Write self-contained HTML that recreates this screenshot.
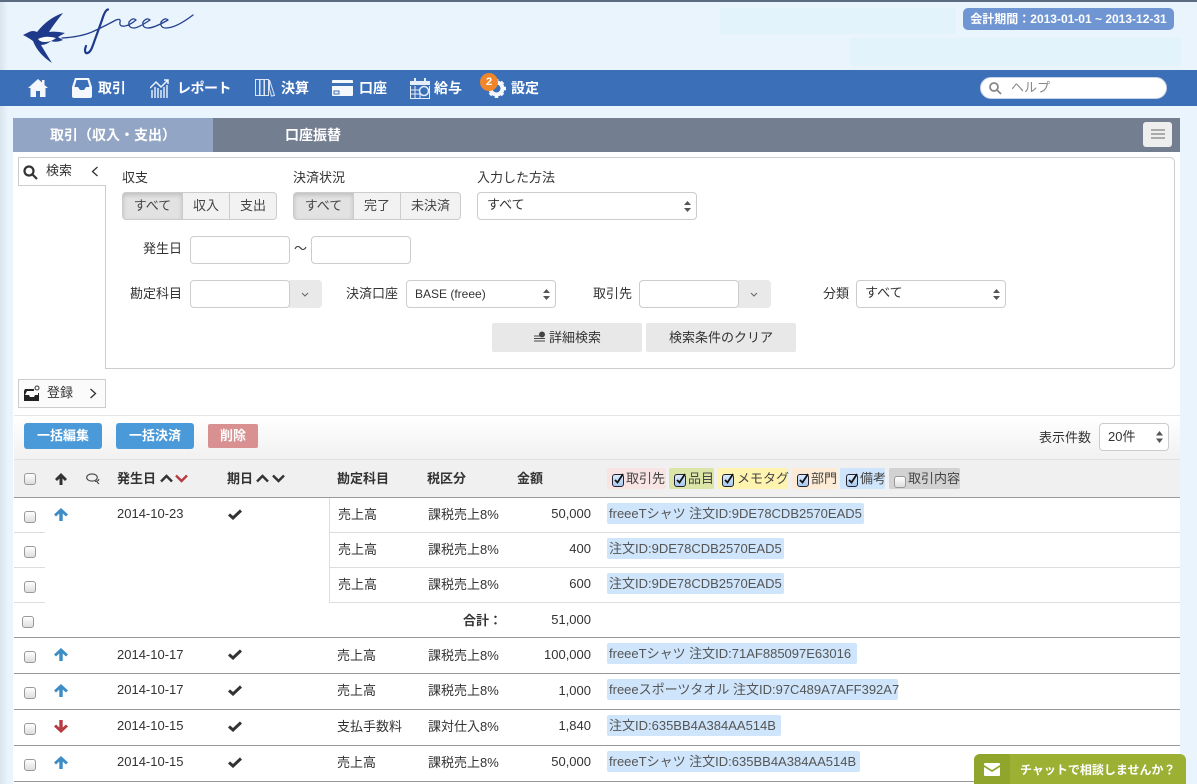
<!DOCTYPE html>
<html lang="ja"><head><meta charset="utf-8"><title>freee</title>
<style>
html,body{margin:0;padding:0}
body{width:1197px;height:784px;overflow:hidden;position:relative;background:#eaf4fc;font-family:"Liberation Sans","Noto Sans CJK JP",sans-serif;font-size:13px;color:#333}
div,span,svg{position:absolute;box-sizing:border-box}
.t{white-space:nowrap;line-height:20px;height:20px}
.b{font-weight:bold}
.nav{color:#fff;font-weight:bold;font-size:14px;top:78px}
.w{color:#fff}
.box{background:#fff;border:1px solid #ccc;border-radius:4px}
.seg{top:192px;height:28px;background:#f2f2f2;border:1px solid #ccc;text-align:center;line-height:25px;font-size:13px;color:#444}
.on{background:#e2e2e2;box-shadow:inset 0 2px 5px rgba(0,0,0,.16)}
.add{background:#e9e9e9;border-radius:0 4px 4px 0;height:28px;top:280px;width:33px}
.cb{width:12px;height:12px;border:1px solid #999;border-radius:3px;background:linear-gradient(#fff,#ddd)}
.chip{top:468px;height:21px;border-radius:2px}
.ck{top:474px;width:12px;height:13px;border:1px solid #223;border-radius:3px;background:linear-gradient(#dcecff,#a8c8ee)}
.hl{background:#cfe5fb;height:21px;border-radius:2px;left:607px;line-height:22px;padding-left:2px;color:#555;white-space:nowrap;font-size:13px}
.ln{left:14px;width:1166px;height:1px;background:#999}
.lt{height:1px;background:#ddd}
.r{text-align:right;left:500px;width:91px}
</style></head><body>
<div style="left:0;top:0;width:1197px;height:2px;background:#5b6b80"></div>
<div style="left:0;top:2px;width:8px;height:782px;background:linear-gradient(90deg,#d9e4ec,#eaf4fc)"></div>

<div style="left:720px;top:8px;width:236px;height:26px;background:#e3f3fb"></div>
<div style="left:850px;top:38px;width:331px;height:28px;background:#e3f3fb"></div>
<div class="t b w" style="left:963px;top:8px;width:211px;height:22px;background:#6f96d3;border-radius:5px;text-align:center;font-size:12px;line-height:22px">会計期間：2013-01-01 ~ 2013-12-31</div>

<svg style="left:20px;top:8px" width="180" height="60" viewBox="0 0 180 60">
<path fill="#1f3a8a" d="M3 27 L9 24 Q13 22 17 24 Q28 10 43 5 Q34 16 29 24 Q36 23 45 25 L38 29 L43 32 Q36 35 31 33 Q26 37 21 37 Q27 47 32 55 Q18 46 13 33 Q9 30 3 27Z"/>
<path fill="#fff" d="M18 31 Q26 27 36 30 Q31 34 25 34 Q20 34 18 31Z"/>
<path fill="none" stroke="#24408f" stroke-width="1.300" stroke-linecap="round" stroke-linejoin="round" d="M42 30 Q60 29 72 24 Q85 18 96 12 Q101 10 100 14 Q99 19 105 18 Q110 17 116 12 Q113 9 109 14 Q108 20 114 20 Q118 20 130 12 Q127 9 123 14 Q122 20 128 20 Q134 20 148 12 Q145 9 141 14 Q140 20 146 20 Q156 20 173 7"/>
<path fill="none" stroke="#1f3a8a" stroke-width="2.200" stroke-linecap="round" d="M88 1.500 Q85 2 82 12 L73 37 Q70 46 66 45 Q64 43 66 38"/>
</svg>

<div style="left:0;top:70px;width:1197px;height:36px;background:#3b70b9"></div>
<svg style="left:28px;top:79px" width="20" height="18" viewBox="0 0 20 18"><path fill="#f4f8fc" d="M10 0 L14 3.500 V1 H16.500 V6 L20 9 H17.500 V18 H12 V12 H8 V18 H2.500 V9 H0Z"/></svg>
<svg style="left:72px;top:78px" width="20" height="20" viewBox="0 0 20 20"><path fill="#f4f8fc" d="M3 0 H17 L20 9 V18 Q20 20 18 20 H2 Q0 20 0 18 V9Z M4.500 2 L2.500 9 H6 L8 12 H12 L14 9 H17.500 L15.500 2Z" fill-rule="evenodd"/></svg>
<div class="t nav" style="left:98px">取引</div>
<svg style="left:150px;top:79px" width="20" height="19" viewBox="0 0 20 19" fill="none" stroke="#eef4fb"><path stroke-width="1.500" d="M0 9 L6 3 L11 8 L18 1 M14 1 H18 V5"/><path stroke-width="1.400" d="M2 19 V11 M5 19 V8 M8 19 V9 M11 19 V11 M14 19 V8 M17 19 V6"/></svg>
<div class="t nav" style="left:177px;letter-spacing:-.5px">レポート</div>
<svg style="left:255px;top:79px" width="20" height="18" viewBox="0 0 20 18" fill="none" stroke="#dce6f5" stroke-width="1"><rect x=".5" y=".5" width="4" height="16"/><rect x="5" y=".5" width="4" height="16"/><rect x="9.500" y=".5" width="4" height="16"/><path d="M14.500 1 L19.500 16.500 L16.500 17 L14.500 10Z"/></svg>
<div class="t nav" style="left:281px">決算</div>
<svg style="left:332px;top:80px" width="21" height="16" viewBox="0 0 21 16"><path fill="#f4f8fc" d="M1 0 H20 Q21 0 21 1 V3 H0 V1 Q0 0 1 0Z M0 6 H21 V15 Q21 16 20 16 H1 Q0 16 0 15Z"/><rect x="2" y="11" width="5" height="3" fill="none" stroke="#3b70b9"/></svg>
<div class="t nav" style="left:359px">口座</div>
<svg style="left:410px;top:78px" width="20" height="21" viewBox="0 0 20 21"><path fill="#e4edf8" d="M0 3 H4 V0 H6 V3 H14 V0 H16 V3 H20 V7 H0Z"/><path fill="none" stroke="#e4edf8" d="M.5 8 V20.500 H19.500 V8 M5 8 V20 M10 12 V20 M1 12 H12 M1 16 H12"/><circle cx="14" cy="13" r="4.500" fill="#3b70b9" stroke="#e4edf8" stroke-width="1.500"/></svg>
<div class="t nav" style="left:434px">給与</div>
<svg style="left:486px;top:78px" width="21" height="21" viewBox="0 0 21 21"><circle cx="10.500" cy="10.500" r="6" fill="none" stroke="#f4f8fc" stroke-width="4"/><path stroke="#f4f8fc" stroke-width="3.500" d="M10.500 1 V20 M1 10.500 H20 M4 4 L17 17 M17 4 L4 17"/><circle cx="10.500" cy="10.500" r="4" fill="#3b70b9"/></svg>
<div style="left:480px;top:73px;width:18px;height:18px;border-radius:9px;background:#f0862a;color:#fff;font-size:11px;font-weight:bold;text-align:center;line-height:18px">2</div>
<div class="t nav" style="left:511px">設定</div>
<div style="left:980px;top:77px;width:187px;height:22px;background:#fff;border:1px solid #c6d3e6;border-radius:11px"></div>
<svg style="left:988px;top:81px" width="14" height="14" viewBox="0 0 14 14" fill="none" stroke="#888" stroke-width="1.800"><circle cx="6" cy="6" r="4"/><path d="M9 9 L13 13"/></svg>
<div class="t" style="left:1011px;top:78px;color:#888;font-size:13px">ヘルプ</div>

<!-- content -->
<div style="left:13px;top:118px;width:1167px;height:666px;background:#fff"></div>
<div style="left:13px;top:118px;width:200px;height:34px;background:#93a5c4"></div>
<div style="left:213px;top:118px;width:967px;height:34px;background:#747e91"></div>
<div class="t b w" style="left:50px;top:125px;font-size:14px">取引（収入・支出）</div>
<div class="t b w" style="left:285px;top:125px;font-size:14px">口座振替</div>
<div style="left:1143px;top:122px;width:29px;height:25px;background:#eee;border-radius:3px"></div>
<div style="left:1151px;top:129px;width:14px;height:2px;background:#aaa"></div>
<div style="left:1151px;top:133px;width:14px;height:2px;background:#aaa"></div>
<div style="left:1151px;top:137px;width:14px;height:2px;background:#aaa"></div>

<!-- search -->
<div style="left:105px;top:157px;width:1070px;height:212px;background:#fff;border:1px solid #ccc;border-radius:0 5px 5px 0"></div>
<div style="left:18px;top:157px;width:88px;height:29px;background:#fff;border:1px solid #ccc;border-right:0"></div>
<svg style="left:23px;top:165px" width="15" height="15" viewBox="0 0 15 15" fill="none" stroke="#333" stroke-width="2.200"><circle cx="6" cy="6" r="4.500"/><path d="M9.500 9.500 L14 14"/></svg>
<div class="t" style="left:46px;top:161px">検索</div>
<svg style="left:91px;top:166px" width="8" height="11" viewBox="0 0 8 11" fill="none" stroke="#333" stroke-width="1.300"><path d="M6.500 1 L1.500 5.500 L6.500 10"/></svg>
<div style="left:18px;top:379px;width:88px;height:29px;background:#fbfbfb;border:1px solid #ccc"></div>
<svg style="left:24px;top:385px" width="16" height="16" viewBox="0 0 16 16"><path fill="#222" d="M1 4 H10 V6 H3 L1 10 V15 H14 V8 H15 V16 H0 V6Z M1 10 H5 L6 12 H10 L11 10 H15 V16 H0V10Z"/><circle cx="13" cy="3" r="2" fill="none" stroke="#333"/></svg>
<div class="t" style="left:47px;top:383px">登録</div>
<svg style="left:89px;top:388px" width="8" height="11" viewBox="0 0 8 11" fill="none" stroke="#333" stroke-width="1.300"><path d="M1.500 1 L6.500 5.500 L1.500 10"/></svg>

<div class="t" style="left:122px;top:168px">収支</div>
<div class="seg on" style="left:122px;width:61px;border-radius:4px 0 0 4px">すべて</div>
<div class="seg" style="left:182px;width:48px">収入</div>
<div class="seg" style="left:229px;width:48px;border-radius:0 4px 4px 0">支出</div>
<div class="t" style="left:293px;top:168px">決済状況</div>
<div class="seg on" style="left:293px;width:61px;border-radius:4px 0 0 4px">すべて</div>
<div class="seg" style="left:353px;width:48px">完了</div>
<div class="seg" style="left:400px;width:61px;border-radius:0 4px 4px 0">未決済</div>
<div class="t" style="left:477px;top:168px">入力した方法</div>
<div class="box" style="left:477px;top:192px;width:220px;height:28px"></div>
<div class="t" style="left:487px;top:195px">すべて</div>
<svg style="left:684px;top:201px" width="7" height="11" viewBox="0 0 7 11" fill="#555"><path d="M3.500 0 L7 4 H0Z M0 7 H7 L3.500 11Z"/></svg>

<div class="t" style="left:143px;top:239px">発生日</div>
<div class="box" style="left:190px;top:236px;width:100px;height:28px"></div>
<div class="t" style="left:294px;top:239px">〜</div>
<div class="box" style="left:311px;top:236px;width:100px;height:28px"></div>

<div class="t" style="left:130px;top:284px">勘定科目</div>
<div class="add" style="left:289px"></div>
<div class="box" style="left:190px;top:280px;width:100px;height:28px"></div>
<svg style="left:301px;top:292px" width="8" height="6" viewBox="0 0 8 6" fill="none" stroke="#666"><path d="M1 1 L4 4 L7 1"/></svg>
<div class="t" style="left:346px;top:284px">決済口座</div>
<div class="box" style="left:406px;top:280px;width:150px;height:28px"></div>
<div class="t" style="left:415px;top:284px;font-size:12px">BASE (freee)</div>
<svg style="left:543px;top:289px" width="7" height="11" viewBox="0 0 7 11" fill="#555"><path d="M3.500 0 L7 4 H0Z M0 7 H7 L3.500 11Z"/></svg>
<div class="t" style="left:593px;top:284px">取引先</div>
<div class="add" style="left:738px"></div>
<div class="box" style="left:639px;top:280px;width:100px;height:28px"></div>
<svg style="left:750px;top:292px" width="8" height="6" viewBox="0 0 8 6" fill="none" stroke="#666"><path d="M1 1 L4 4 L7 1"/></svg>
<div class="t" style="left:823px;top:284px">分類</div>
<div class="box" style="left:856px;top:280px;width:150px;height:28px"></div>
<div class="t" style="left:865px;top:283px">すべて</div>
<svg style="left:993px;top:289px" width="7" height="11" viewBox="0 0 7 11" fill="#555"><path d="M3.500 0 L7 4 H0Z M0 7 H7 L3.500 11Z"/></svg>

<div style="left:492px;top:323px;width:150px;height:29px;background:#e8e8e8;border-radius:2px"></div>
<svg style="left:533px;top:331px" width="13" height="12" viewBox="0 0 13 12" fill="none" stroke="#444"><path d="M1 5 H7 M1 7.500 H12 M1 10 H12"/><circle cx="9" cy="3.500" r="2.500" fill="#444"/></svg>
<div class="t" style="left:549px;top:328px">詳細検索</div>
<div style="left:646px;top:323px;width:150px;height:29px;background:#e8e8e8;border-radius:2px"></div>
<div class="t" style="left:669px;top:328px">検索条件のクリア</div>

<!-- toolbar -->
<div style="left:14px;top:415px;width:1166px;height:45px;background:linear-gradient(#fff,#f1f1f1);border-top:1px solid #e5e5e5;border-bottom:1px solid #e2e2e2"></div>
<div class="t b w" style="left:24px;top:423px;width:78px;height:26px;background:#4a9ada;border-radius:3px;text-align:center;line-height:26px">一括編集</div>
<div class="t b w" style="left:116px;top:423px;width:78px;height:26px;background:#4a9ada;border-radius:3px;text-align:center;line-height:26px">一括決済</div>
<div class="t b w" style="left:208px;top:424px;width:50px;height:24px;background:#d99090;border-radius:2px;text-align:center;line-height:24px">削除</div>
<div class="t" style="left:1039px;top:428px">表示件数</div>
<div class="box" style="left:1099px;top:423px;width:70px;height:28px"></div>
<div class="t" style="left:1108px;top:427px">20件</div>
<svg style="left:1156px;top:431px" width="7" height="12" viewBox="0 0 7 12" fill="#555"><path d="M3.500 0 L7 4.500 H0Z M0 7.500 H7 L3.500 12Z"/></svg>

<!-- header -->
<div style="left:14px;top:460px;width:1166px;height:38px;background:#f0f0f0;border-bottom:1px solid #999"></div>
<div class="cb" style="left:24px;top:473px"></div>
<svg style="left:55px;top:473px" width="12" height="12" viewBox="0 0 12 12" fill="#333"><path d="M6 0 L12 6 L10 8 L7.500 5.500 V12 H4.500 V5.500 L2 8 L0 6Z"/></svg>
<svg style="left:86px;top:473px" width="14" height="12" viewBox="0 0 14 12" fill="none" stroke="#444" stroke-width="1.100"><ellipse cx="6" cy="4.500" rx="5.300" ry="3.600"/><path d="M9 8.500 Q12.500 8.500 13 6 M11 9 L13 11"/></svg>
<div class="t b" style="left:117px;top:469px">発生日</div>
<svg style="left:160px;top:474px" width="13" height="9" viewBox="0 0 13 9" fill="none" stroke="#333" stroke-width="2.400"><path d="M1 7.500 L6.500 2 L12 7.500"/></svg>
<svg style="left:175px;top:474px" width="13" height="9" viewBox="0 0 13 9" fill="none" stroke="#b83a42" stroke-width="2.400"><path d="M1 1.500 L6.500 7 L12 1.500"/></svg>
<div class="t b" style="left:227px;top:469px">期日</div>
<svg style="left:256px;top:474px" width="13" height="9" viewBox="0 0 13 9" fill="none" stroke="#333" stroke-width="2.400"><path d="M1 7.500 L6.500 2 L12 7.500"/></svg>
<svg style="left:272px;top:474px" width="13" height="9" viewBox="0 0 13 9" fill="none" stroke="#333" stroke-width="2.400"><path d="M1 1.500 L6.500 7 L12 1.500"/></svg>
<div class="t b" style="left:337px;top:469px">勘定科目</div>
<div class="t b" style="left:427px;top:469px">税区分</div>
<div class="t b" style="left:517px;top:469px">金額</div>

<div class="chip" style="left:607px;width:59px;background:#f9e4e4"></div>
<div class="chip" style="left:669px;width:45px;background:#dbe5a8"></div>
<div class="chip" style="left:717px;width:71px;background:#fff3b0"></div>
<div class="chip" style="left:792px;width:45px;background:#fdebd5"></div>
<div class="chip" style="left:840px;width:45px;background:#cfe5fb"></div>
<div class="chip" style="left:889px;width:71px;background:#d2d2d2"></div>
<div class="ck" style="left:612px"></div><div class="ck" style="left:674px"></div><div class="ck" style="left:722px"></div><div class="ck" style="left:797px"></div><div class="ck" style="left:846px"></div>
<svg style="left:612px;top:472px" width="250" height="14" viewBox="0 0 250 14" fill="none" stroke="#111" stroke-width="1.800"><path d="M3 8 L5.500 10.500 L11 2"/><path d="M65 8 L67.500 10.500 L73 2"/><path d="M113 8 L115.500 10.500 L121 2"/><path d="M188 8 L190.500 10.500 L196 2"/><path d="M237 8 L239.500 10.500 L245 2"/></svg>
<div class="cb" style="left:894px;top:476px"></div>
<div class="t" style="left:626px;top:469px;color:#444">取引先</div>
<div class="t" style="left:688px;top:469px;color:#444">品目</div>
<div class="t" style="left:737px;top:469px;color:#444">メモタグ</div>
<div class="t" style="left:811px;top:469px;color:#444">部門</div>
<div class="t" style="left:860px;top:469px;color:#444">備考</div>
<div class="t" style="left:908px;top:469px;color:#444">取引内容</div>

<!-- row lines -->
<div class="lt" style="left:14px;top:532px;width:31px"></div>
<div class="lt" style="left:14px;top:567px;width:31px"></div>
<div class="lt" style="left:14px;top:602px;width:31px"></div>
<div class="lt" style="left:330px;top:532px;width:850px"></div>
<div class="lt" style="left:330px;top:567px;width:850px"></div>
<div class="lt" style="left:330px;top:602px;width:850px"></div>
<div style="left:329px;top:498px;width:1px;height:105px;background:#ddd"></div>
<div class="ln" style="top:637px"></div>
<div class="ln" style="top:673px"></div>
<div class="ln" style="top:709px"></div>
<div class="ln" style="top:745px"></div>
<div class="ln" style="top:781px"></div>

<!-- checkboxes -->
<div class="cb" style="left:24px;top:511px"></div>
<div class="cb" style="left:24px;top:546px"></div>
<div class="cb" style="left:24px;top:581px"></div>
<div class="cb" style="left:22px;top:616px"></div>
<div class="cb" style="left:24px;top:651px"></div>
<div class="cb" style="left:24px;top:687px"></div>
<div class="cb" style="left:24px;top:723px"></div>
<div class="cb" style="left:24px;top:759px"></div>

<!-- arrows -->
<svg style="left:54px;top:508px" width="14" height="13" viewBox="0 0 14 13" fill="#3c8dc5"><path d="M7 0 L14 6.500 L12 8.500 L8.700 5.500 V13 H5.300 V5.500 L2 8.500 L0 6.500Z"/></svg>
<svg style="left:54px;top:648px" width="14" height="13" viewBox="0 0 14 13" fill="#3c8dc5"><path d="M7 0 L14 6.500 L12 8.500 L8.700 5.500 V13 H5.300 V5.500 L2 8.500 L0 6.500Z"/></svg>
<svg style="left:54px;top:684px" width="14" height="13" viewBox="0 0 14 13" fill="#3c8dc5"><path d="M7 0 L14 6.500 L12 8.500 L8.700 5.500 V13 H5.300 V5.500 L2 8.500 L0 6.500Z"/></svg>
<svg style="left:54px;top:720px" width="14" height="13" viewBox="0 0 14 13" fill="#b83a42"><path d="M7 13 L14 6.500 L12 4.500 L8.700 7.500 V0 H5.300 V7.500 L2 4.500 L0 6.500Z"/></svg>
<svg style="left:54px;top:756px" width="14" height="13" viewBox="0 0 14 13" fill="#3c8dc5"><path d="M7 0 L14 6.500 L12 8.500 L8.700 5.500 V13 H5.300 V5.500 L2 8.500 L0 6.500Z"/></svg>

<!-- checks -->
<svg style="left:228px;top:509px" width="14" height="11" viewBox="0 0 14 11" fill="none" stroke="#333" stroke-width="3"><path d="M1 5.500 L5 9 L13 1.500"/></svg>
<svg style="left:228px;top:649px" width="14" height="11" viewBox="0 0 14 11" fill="none" stroke="#333" stroke-width="3"><path d="M1 5.500 L5 9 L13 1.500"/></svg>
<svg style="left:228px;top:685px" width="14" height="11" viewBox="0 0 14 11" fill="none" stroke="#333" stroke-width="3"><path d="M1 5.500 L5 9 L13 1.500"/></svg>
<svg style="left:228px;top:721px" width="14" height="11" viewBox="0 0 14 11" fill="none" stroke="#333" stroke-width="3"><path d="M1 5.500 L5 9 L13 1.500"/></svg>
<svg style="left:228px;top:757px" width="14" height="11" viewBox="0 0 14 11" fill="none" stroke="#333" stroke-width="3"><path d="M1 5.500 L5 9 L13 1.500"/></svg>

<!-- dates -->
<div class="t" style="left:117px;top:504px">2014-10-23</div>
<div class="t" style="left:117px;top:645px">2014-10-17</div>
<div class="t" style="left:117px;top:680px">2014-10-17</div>
<div class="t" style="left:117px;top:716px">2014-10-15</div>
<div class="t" style="left:117px;top:752px">2014-10-15</div>

<!-- accounts -->
<div class="t" style="left:338px;top:505px">売上高</div>
<div class="t" style="left:338px;top:540px">売上高</div>
<div class="t" style="left:338px;top:575px">売上高</div>
<div class="t" style="left:337px;top:646px">売上高</div>
<div class="t" style="left:337px;top:681px">売上高</div>
<div class="t" style="left:337px;top:717px">支払手数料</div>
<div class="t" style="left:337px;top:753px">売上高</div>

<!-- tax -->
<div class="t" style="left:428px;top:505px">課税売上8%</div>
<div class="t" style="left:428px;top:540px">課税売上8%</div>
<div class="t" style="left:428px;top:575px">課税売上8%</div>
<div class="t" style="left:428px;top:646px">課税売上8%</div>
<div class="t" style="left:428px;top:681px">課税売上8%</div>
<div class="t" style="left:428px;top:717px">課対仕入8%</div>
<div class="t" style="left:428px;top:753px">課税売上8%</div>

<div class="t b" style="left:463px;top:611px">合計：</div>

<!-- amounts -->
<div class="t r" style="top:504px">50,000</div>
<div class="t r" style="top:539px">400</div>
<div class="t r" style="top:574px">600</div>
<div class="t r" style="top:610px">51,000</div>
<div class="t r" style="top:645px">100,000</div>
<div class="t r" style="top:681px">1,000</div>
<div class="t r" style="top:716px">1,840</div>
<div class="t r" style="top:752px">50,000</div>

<!-- highlight labels -->
<div class="hl" style="top:503px;width:257px">freeeTシャツ 注文ID:9DE78CDB2570EAD5</div>
<div class="hl" style="top:538px;width:177px">注文ID:9DE78CDB2570EAD5</div>
<div class="hl" style="top:573px;width:177px">注文ID:9DE78CDB2570EAD5</div>
<div class="hl" style="top:643px;width:250px">freeeTシャツ 注文ID:71AF885097E63016</div>
<div class="hl" style="top:679px;width:291px">freeeスポーツタオル 注文ID:97C489A7AFF392A7</div>
<div class="hl" style="top:715px;width:174px">注文ID:635BB4A384AA514B</div>
<div class="hl" style="top:751px;width:253px">freeeTシャツ 注文ID:635BB4A384AA514B</div>

<!-- chat -->
<div style="left:974px;top:754px;width:212px;height:30px;background:#9cb034;border-radius:6px 6px 0 0;overflow:hidden"><div style="left:0;top:0;width:36px;height:30px;background:#8fa52b"></div></div>
<svg style="left:984px;top:763px" width="16" height="13" viewBox="0 0 16 13"><path fill="#fff" d="M1 0 H15 Q16 0 16 1 V2 L8 7 L0 2 V1 Q0 0 1 0Z M0 4 L8 9 L16 4 V12 Q16 13 15 13 H1 Q0 13 0 12Z"/></svg>
<div class="t b w" style="left:1020px;top:760px;font-size:12px">チャットで相談しませんか？</div>
</body></html>
